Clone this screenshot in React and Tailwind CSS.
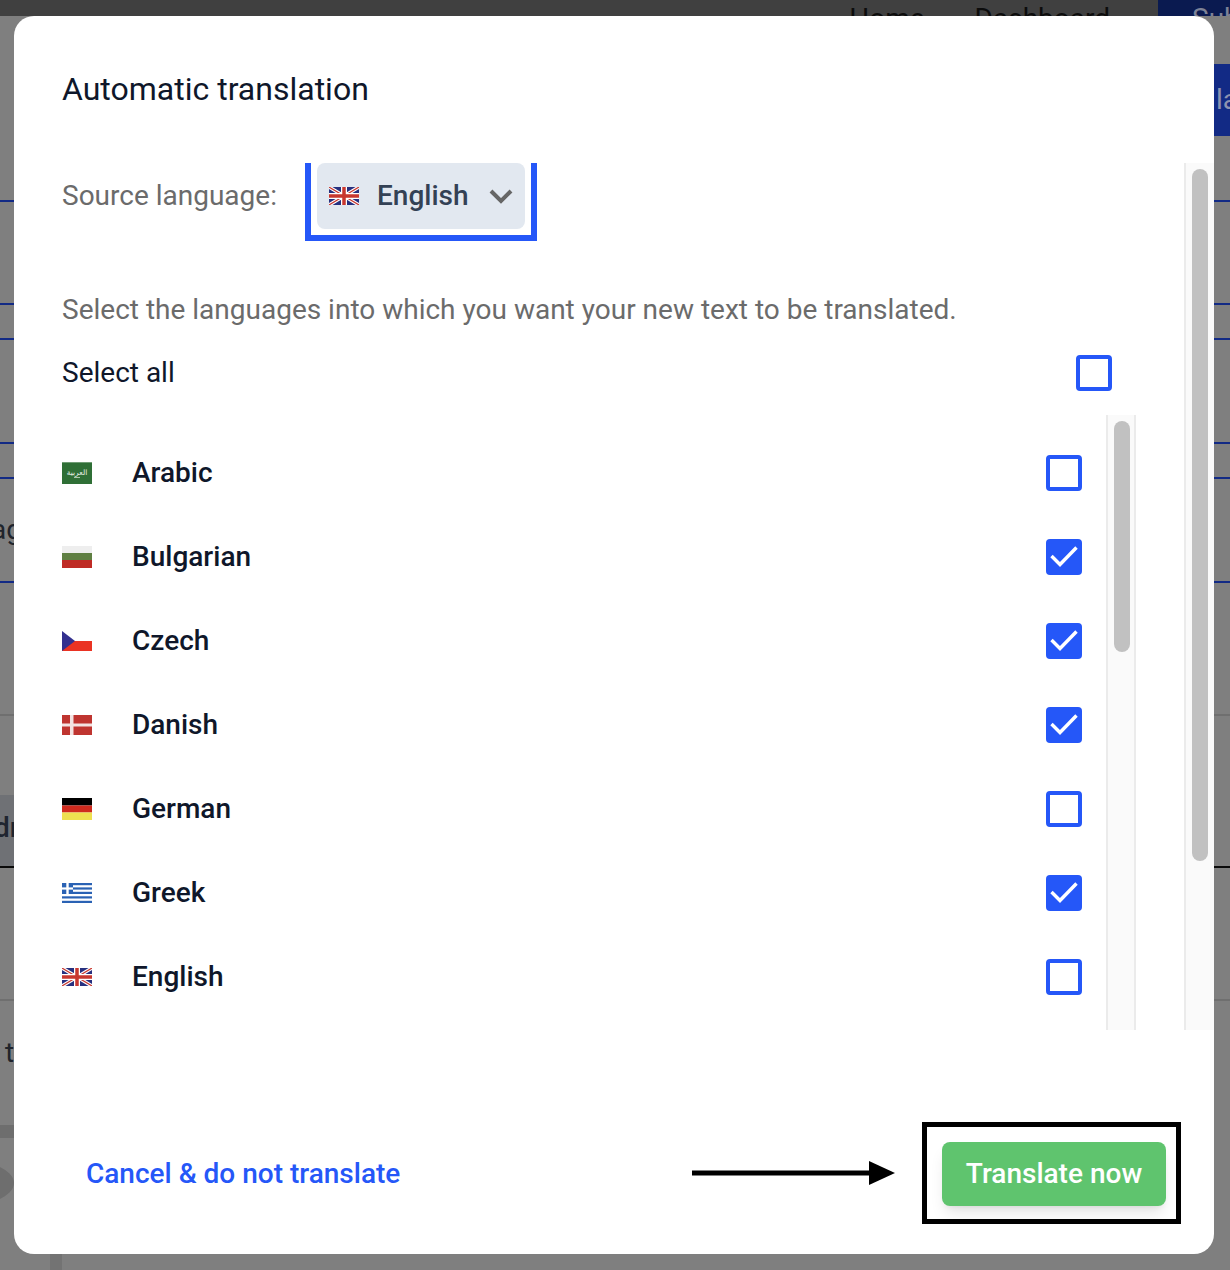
import React from "react";

function FlagUK({ className }) {
  return (
    <svg className={className} width="30" height="18" viewBox="0 0 60 36">
      <rect width="60" height="36" fill="#27307f" />
      <path d="M0 0L60 36M60 0L0 36" stroke="#fff" strokeWidth="7" />
      <path d="M0 0L60 36M60 0L0 36" stroke="#c8372f" strokeWidth="2.4" />
      <path d="M30 0V36M0 18H60" stroke="#fff" strokeWidth="12" />
      <path d="M30 0V36M0 18H60" stroke="#c8372f" strokeWidth="7" />
    </svg>
  );
}

function FlagSA() {
  return (
    <svg width="30" height="22" viewBox="0 0 30 22">
      <rect width="30" height="22" fill="#2f6f36" />
      <rect width="30" height="1" fill="#6f9c74" />
      <text x="15" y="12.5" textAnchor="middle" fontSize="7.5" fill="#e8f0e8" fontFamily="'DejaVu Sans', sans-serif">العربية</text>
      <rect x="12" y="15" width="6" height="1" fill="#a9c6ac" />
    </svg>
  );
}

function FlagBG() {
  return (
    <svg width="30" height="22" viewBox="0 0 30 22">
      <rect width="30" height="7" fill="#eeeeee" />
      <rect y="7" width="30" height="7" fill="#5f7f42" />
      <rect y="14" width="30" height="8" fill="#bf2b25" />
    </svg>
  );
}

function FlagCZ() {
  return (
    <svg width="30" height="20" viewBox="0 0 30 20">
      <rect width="30" height="10" fill="#ffffff" />
      <rect y="10" width="30" height="10" fill="#ea3323" />
      <path d="M0 0L13 10L0 20Z" fill="#33308f" />
    </svg>
  );
}

function FlagDK() {
  return (
    <svg width="30" height="20" viewBox="0 0 30 20">
      <rect width="30" height="20" fill="#bf3530" />
      <rect x="8" width="3.5" height="20" fill="#f3e3e2" />
      <rect y="8.5" width="30" height="3" fill="#f3e3e2" />
    </svg>
  );
}

function FlagDE() {
  return (
    <svg width="30" height="22" viewBox="0 0 30 22">
      <rect width="30" height="7.5" fill="#000000" />
      <rect y="7.5" width="30" height="7" fill="#cf2a1e" />
      <rect y="14.5" width="30" height="7.5" fill="#eee050" />
    </svg>
  );
}

function FlagGR() {
  return (
    <svg width="30" height="20" viewBox="0 0 30 20">
      <rect width="30" height="20" fill="#ffffff" />
      <rect y="0" width="30" height="2.2" fill="#2a62b4" />
      <rect y="4.4" width="30" height="2.2" fill="#2a62b4" />
      <rect y="8.8" width="30" height="2.2" fill="#2a62b4" />
      <rect y="13.3" width="30" height="2.2" fill="#2a62b4" />
      <rect y="17.8" width="30" height="2.2" fill="#2a62b4" />
      <rect width="11" height="11" fill="#2a62b4" />
      <rect x="4.3" width="2.4" height="11" fill="#ffffff" />
      <rect y="4.4" width="11" height="2.2" fill="#ffffff" />
    </svg>
  );
}

function Checkbox({ checked }) {
  if (checked) {
    return (
      <div className="flex h-9 w-9 shrink-0 items-center justify-center rounded bg-[#2557f8]">
        <svg width="36" height="36" viewBox="0 0 36 36" fill="none">
          <path d="M5.5 17L14 25.5L30.5 8.5" stroke="#fff" strokeWidth="3.4" />
        </svg>
      </div>
    );
  }
  return <div className="h-9 w-9 shrink-0 rounded border-4 border-[#2557f8] bg-white" />;
}

const languages = [
  { name: "Arabic", flag: <FlagSA />, checked: false },
  { name: "Bulgarian", flag: <FlagBG />, checked: true },
  { name: "Czech", flag: <FlagCZ />, checked: true },
  { name: "Danish", flag: <FlagDK />, checked: true },
  { name: "German", flag: <FlagDE />, checked: false },
  { name: "Greek", flag: <FlagGR />, checked: true },
  { name: "English", flag: <FlagUK />, checked: false },
];

function Backdrop() {
  return (
    <div className="flex h-[1270px] w-[1230px] flex-col bg-[#7f7f7f]">
      <div className="flex h-4 justify-end overflow-hidden bg-[#404040] text-[28px] leading-[38px] text-[#0c0c0c]">
        <span>Home</span>
        <span className="ml-[50px]">Dashboard</span>
        <div className="ml-[48px] w-[72px] bg-[#0a1a50] pl-[34px] text-[#7d8296]">Sub</div>
      </div>
      <div className="h-12" />
      <div className="flex h-[72px] justify-end">
        <div className="w-4 overflow-hidden bg-[#122a85] pl-[2px] text-[28px] leading-[72px] text-[#8d93b0]">la</div>
      </div>
      <div className="h-[66px] border-b-2 border-[#122a85]" />
      <div className="h-[103px] border-b-2 border-[#122a85]" />
      <div className="h-[35px] border-b-2 border-[#122a85]" />
      <div className="h-[104px] border-b-2 border-[#122a85]" />
      <div className="h-[35px] border-b-2 border-[#122a85]" />
      <div className="h-[104px] w-[1230px] border-b-2 border-[#122a85]">
        <div className="-ml-[9px] w-[23px] overflow-hidden text-[28px] leading-[102px] text-[#20242c]">ag</div>
      </div>
      <div className="h-[133px] border-b-2 border-[#6f6f6f]" />
      <div className="h-[79px]" />
      <div className="h-[73px] border-b-2 border-[#0a0a0a]">
        <div className="h-[71px] w-[14px] overflow-hidden bg-[#6f7175] text-[28px] leading-[66px] font-medium text-[#1f2530]">
          <span className="-ml-[6px] block">dr</span>
        </div>
      </div>
      <div className="h-[133px] border-b-2 border-[#6f6f6f]" />
      <div className="h-[124px] pt-[32px] pl-[5px] text-[28px] leading-[40px] text-[#20242c]">t</div>
      <div className="h-[13px] w-[14px] bg-[#6e6e6e]" />
      <div className="h-5" />
      <div className="h-[50px] w-[14px] overflow-hidden">
        <div className="-ml-[106px] h-[50px] w-[120px] rounded-[50%] bg-[#6e6e6e]" />
      </div>
      <div className="h-[46px]" />
      <div className="ml-[50px] h-4 w-3 bg-[#737373]" />
    </div>
  );
}

export default function App() {
  return (
    <div className="relative h-[1270px] w-[1230px] overflow-hidden font-['Roboto',sans-serif]">
      <Backdrop />
      <div className="absolute top-4 left-[14px] flex h-[1238px] w-[1200px] flex-col overflow-hidden rounded-[20px] bg-white">
        <h2 className="h-[147px] pt-[55px] pl-12 text-[32px] leading-[36px] font-normal text-[#0f172a]">
          Automatic translation
        </h2>

        <div className="flex h-[867px] overflow-hidden">
          <div className="flex-1 overflow-hidden pl-12">
            <div className="flex h-[78px] items-start">
              <span className="w-[243px] pt-[15px] text-[28px] leading-[36px] text-[#6b6b6b]">Source language:</span>
              <div className="h-[78px] w-[232px] border-x-[6px] border-b-[6px] border-[#2557f8] bg-white px-[6px]">
                <div className="flex h-[66px] w-[208px] items-center rounded-lg bg-[#e2e8f0] pl-3">
                  <FlagUK />
                  <span className="ml-[18px] text-[28px] leading-[36px] font-medium text-[#334155]">English</span>
                  <svg className="ml-[20px]" width="24" height="16" viewBox="0 0 24 16" fill="none">
                    <path d="M2 3L12 13L22 3" stroke="#666666" strokeWidth="4" />
                  </svg>
                </div>
              </div>
            </div>

            <p className="mt-[51px] text-[28px] leading-[36px] text-[#6b6b6b]">
              Select the languages into which you want your new text to be translated.
            </p>

            <div className="mt-[27px] flex h-9 items-center justify-between pr-[72px]">
              <span className="text-[28px] leading-[36px] text-[#0f172a]">Select all</span>
              <Checkbox checked={false} />
            </div>

            <div className="mt-6 flex h-[615px] overflow-hidden pr-12">
              <div className="flex-1 overflow-hidden pt-4 pr-6">
                {languages.map((l) => (
                  <div key={l.name} className="flex h-[84px] items-center">
                    <div className="flex w-[70px] shrink-0 items-center">{l.flag}</div>
                    <span className="flex-1 text-[28px] leading-[36px] font-medium text-[#0f172a]">{l.name}</span>
                    <Checkbox checked={l.checked} />
                  </div>
                ))}
              </div>
              <div className="h-[615px] w-[30px] shrink-0 border-x-2 border-[#ebebeb] bg-[#fafafa] px-[6px] pt-[6px]">
                <div className="h-[231px] w-4 rounded-lg bg-[#c1c1c1]" />
              </div>
            </div>
          </div>

          <div className="h-[867px] w-[30px] shrink-0 border-l-2 border-[#ebebeb] bg-[#fafafa] pt-[6px] pl-[6px]">
            <div className="h-[692px] w-4 rounded-lg bg-[#c1c1c1]" />
          </div>
        </div>

        <div className="mt-[92px] flex h-[102px] items-center pr-[33px] pl-[72px]">
          <a className="flex-1 pt-[2px] text-[28px] leading-[36px] font-medium text-[#2557f8]">Cancel &amp; do not translate</a>
          <svg className="mr-[27px]" width="203" height="26" viewBox="0 0 203 26">
            <path d="M0 13H180" stroke="#000" strokeWidth="5" />
            <path d="M177 1L203 13L177 25Z" fill="#000" />
          </svg>
          <div className="h-[102px] w-[259px] border-[5px] border-black pt-[15px] pl-[15px]">
            <button className="h-16 w-[224px] rounded-lg bg-[#5fc46e] text-[28px] leading-[36px] font-medium text-white shadow-lg">
              Translate now
            </button>
          </div>
        </div>
      </div>
    </div>
  );
}
